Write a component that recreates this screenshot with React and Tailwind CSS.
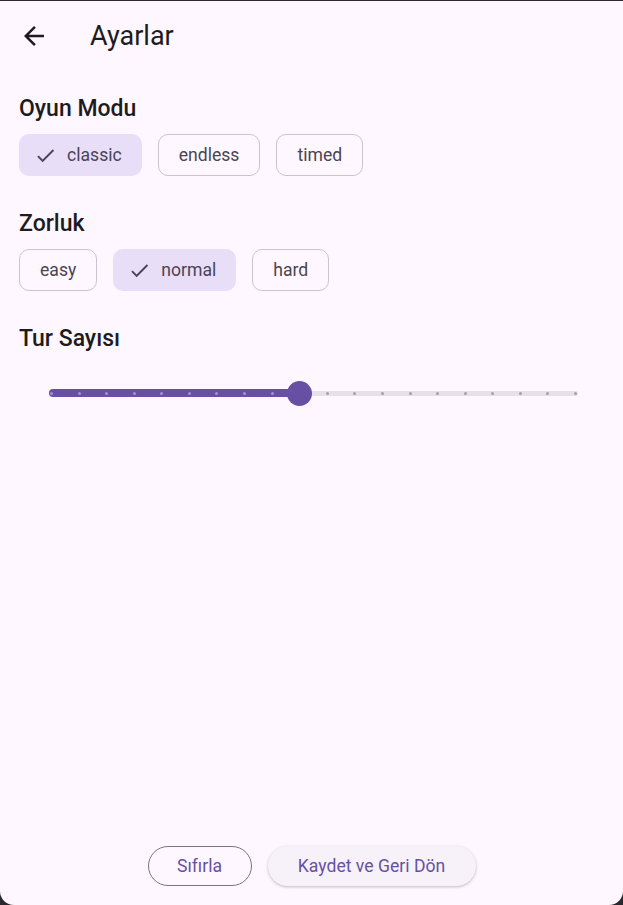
import React, { useState } from "react";

const ArrowBack = () => (
  <svg width="30" height="30" viewBox="0 0 24 24" fill="#1d1b20">
    <path d="M20 11H7.83l5.59-5.59L12 4l-8 8 8 8 1.41-1.41L7.83 13H20v-2z" />
  </svg>
);

const Check = () => (
  <svg width="23" height="23" viewBox="0 0 24 24" fill="#4a4458">
    <path d="M9 16.17L4.83 12l-1.42 1.41L9 19 21 7l-1.41-1.41z" />
  </svg>
);

const Chip = ({ label, selected, onClick }) =>
  selected ? (
    <button
      onClick={onClick}
      className="h-[42px] flex items-center gap-[10px] pl-[15px] pr-[20px] rounded-[10px] bg-[#e8def8] text-[#4a4458] text-[17.6px]"
    >
      <Check />
      <span>{label}</span>
    </button>
  ) : (
    <button
      onClick={onClick}
      className="h-[42px] flex items-center px-[20px] rounded-[10px] border border-[#cac4d0] text-[#49454f] text-[17.6px]"
    >
      {label}
    </button>
  );

const Slider = ({ value, steps }) => {
  const pct = (value / (steps - 1)) * 100;
  return (
    <div className="h-[60px] ml-[30px] mr-[26px] flex items-center">
      <div className="relative w-full h-[8px] flex items-center">
        <div className="absolute left-0 right-0 h-[5px] rounded-full bg-[#e6e0e9]" />
        <div
          className="absolute left-0 h-[8px] rounded-full bg-[#6750a4]"
          style={{ width: `${pct}%` }}
        />
        <div className="relative w-full flex justify-between px-[1px]">
          {Array.from({ length: steps }).map((_, i) => (
            <span
              key={i}
              className={
                "w-[3px] h-[3px] rounded-full " +
                (i <= value ? "bg-[#a392d0]" : "bg-[#a59fab]")
              }
            />
          ))}
        </div>
        <div
          className="absolute w-[25px] h-[25px] -ml-[12.5px] rounded-full bg-[#6750a4]"
          style={{ left: `${pct}%` }}
        />
      </div>
    </div>
  );
};

export default function App() {
  const [mode, setMode] = useState("classic");
  const [level, setLevel] = useState("normal");

  return (
    <div
      className="bg-[#2b2930] pt-px h-[905px]"
      style={{ fontFamily: "Roboto, 'Noto Sans', sans-serif" }}
    >
      <div className="h-[904px] rounded-b-[14px] bg-[#fef7ff] flex flex-col">
        {/* App bar */}
        <div className="h-[70px] flex items-center pl-[19px]">
          <ArrowBack />
          <h1 className="ml-[41px] text-[27px] text-[#1d1b20] leading-none">Ayarlar</h1>
        </div>

        {/* Body */}
        <div className="flex-1 px-[19px] pt-[21px]">
          <h2 className="h-[30px] pt-[4px] flex items-center text-[23px] font-medium text-[#1d1b20]">
            Oyun Modu
          </h2>
          <div className="mt-[12px] flex gap-[16px]">
            {["classic", "endless", "timed"].map((m) => (
              <Chip key={m} label={m} selected={mode === m} onClick={() => setMode(m)} />
            ))}
          </div>

          <h2 className="mt-[31px] h-[30px] pt-[4px] flex items-center text-[23px] font-medium text-[#1d1b20]">
            Zorluk
          </h2>
          <div className="mt-[12px] flex gap-[16px]">
            {["easy", "normal", "hard"].map((l) => (
              <Chip key={l} label={l} selected={level === l} onClick={() => setLevel(l)} />
            ))}
          </div>

          <h2 className="mt-[32px] h-[30px] pt-[3px] flex items-center text-[23px] font-medium text-[#1d1b20]">
            Tur Sayısı
          </h2>
          <div className="mt-[10px]">
            <Slider value={9} steps={20} />
          </div>
        </div>

        {/* Actions */}
        <div className="flex justify-center gap-[16px] pb-[19px]">
          <button className="h-[40px] w-[104px] rounded-full border border-[#79747e] text-[#6750a4] text-[17.6px]">
            Sıfırla
          </button>
          <button className="h-[40px] w-[208px] rounded-full bg-[#f7f2fa] text-[#6750a4] text-[17.6px] shadow-[0_1px_3px_rgba(0,0,0,0.25)]">
            Kaydet ve Geri Dön
          </button>
        </div>
      </div>
    </div>
  );
}
